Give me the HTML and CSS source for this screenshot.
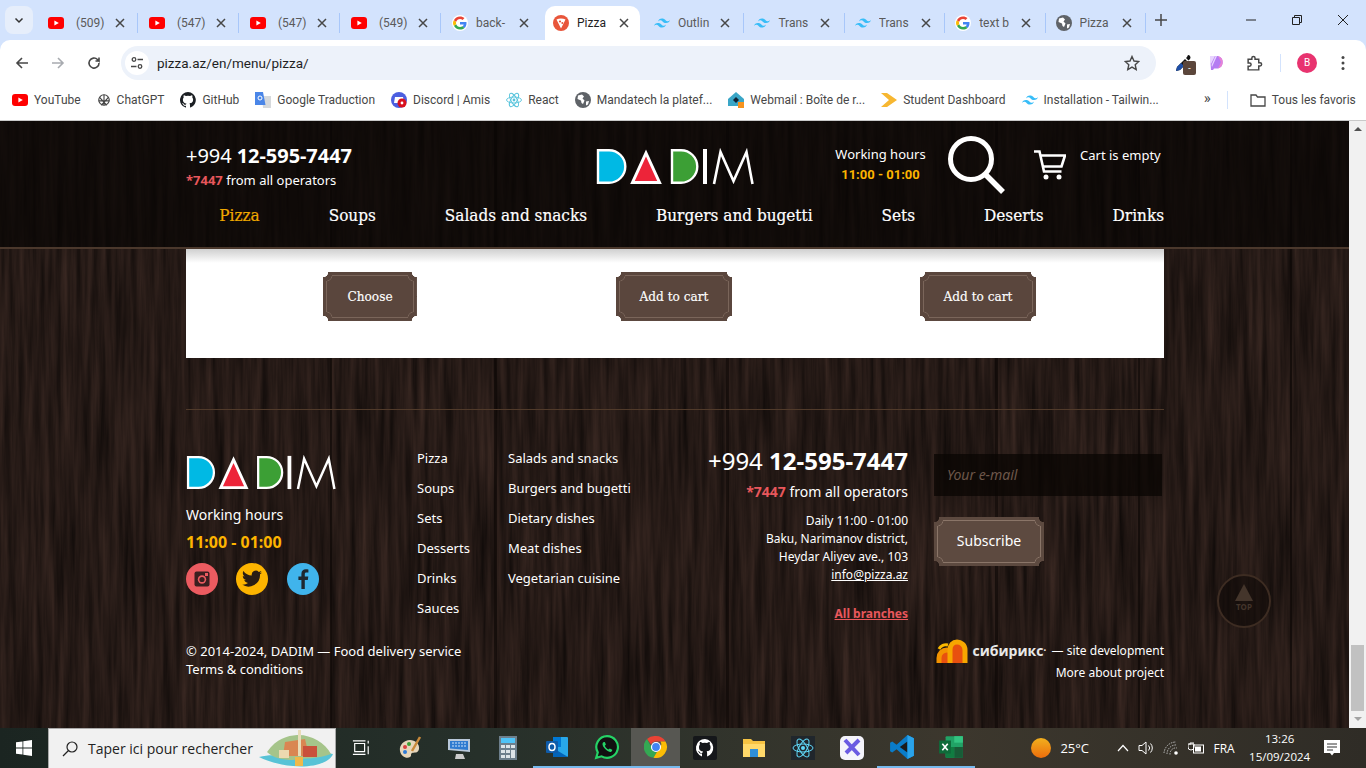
FILE: index.html
```html
<!DOCTYPE html>
<html>
<head>
  <title>Pizza - DADIM</title>
  <link rel="stylesheet" href="styles.css">
</head>
<body>
  <svg class="defs" width="0" height="0">
    <symbol id="yt" viewBox="0 0 16 16"><rect y="2" width="16" height="12" rx="3" fill="#f00"/><path d="M6.4 5.4 10.8 8l-4.4 2.6z" fill="#fff"/></symbol>
    <symbol id="tw" viewBox="0 0 16 16"><path d="M4 6.5C4.5 4.5 5.8 3.5 8 3.5c3.2 0 3.5 2.400 5.200 2.800 1 .2 2-.2 2.800-1.300-.5 2-1.800 3-4 3-3.200 0-3.500-2.400-5.200-2.800C5.800 5 4.800 5.400 4 6.500zM0 11c.5-2 1.800-3 4-3 3.200 0 3.500 2.400 5.200 2.800 1 .2 2-.2 2.800-1.300-.5 2-1.800 3-4 3-3.200 0-3.500-2.400-5.200-2.800C1.800 9.500.8 9.900 0 11z" fill="#38bdf8"/></symbol>
    <symbol id="gg" viewBox="0 0 16 16"><circle cx="8" cy="8" r="8" fill="#fff"/><path d="M14.500 8.200c0-.5 0-.9-.1-1.300H8v2.500h3.700c-.2.900-.7 1.600-1.300 2.100l2.100 1.600c1.200-1.200 2-2.900 2-4.900z" fill="#4285f4"/><path d="M8 14.500c1.800 0 3.300-.6 4.500-1.600l-2.100-1.600c-.6.400-1.400.7-2.400.7-1.800 0-3.300-1.200-3.800-2.800L1.900 10.800C3 13 5.300 14.500 8 14.500z" fill="#34a853"/><path d="M4.200 9.200C4.100 8.800 4 8.400 4 8s.1-.8.200-1.200L1.900 5.200C1.300 6 1 7 1 8s.3 2 .9 2.800z" fill="#fbbc05"/><path d="M8 4c1 0 1.900.4 2.600 1l1.900-1.900C11.300 2.100 9.800 1.500 8 1.500 5.300 1.500 3 3 1.900 5.200l2.300 1.600C4.700 5.200 6.200 4 8 4z" fill="#ea4335"/></symbol>
    <symbol id="globe" viewBox="0 0 16 16"><circle cx="8" cy="8" r="8" fill="#5f6368"/><path d="M3 3.500 7 2.500 9 4.500 7.500 6.500 9.500 8.500 8 12 6.500 11 6 8.500 2.500 7zM11 9.500 14 9 13 12.500 11 13.500z" fill="#fff"/></symbol>
    <symbol id="close" viewBox="0 0 10 10"><path d="M1 1 9 9M9 1 1 9" stroke="#474747" stroke-width="1.500" fill="none"/></symbol>
    <symbol id="tick" viewBox="0 0 24 24"><path d="M9 19 16 12 9 5" stroke="#333" stroke-width="3" fill="none"/></symbol>
    <symbol id="logo" viewBox="0 0 158 38">
      <path d="M2 3.200H13A16.300 16.300 0 0 1 13 35.800H2Z" fill="#00b9e4" stroke="#fff" stroke-width="2.400"/>
      <path d="M50 6 63.500 35.500H36.500Z" fill="#ed2439" stroke="#fff" stroke-width="3"/>
      <path d="M76 3.200H85A16.300 16.300 0 0 1 85 35.800H76Z" fill="#3c9f35" stroke="#fff" stroke-width="2.400"/>
      <path d="M109 2V37" stroke="#fff" stroke-width="4" fill="none"/>
      <path d="M118 37 124.500 5 137.500 34 150.500 5 156.500 37" stroke="#fff" stroke-width="2.600" fill="none"/>
    </symbol>
    <filter id="grain" x="0" y="0" width="100%" height="100%" color-interpolation-filters="sRGB">
      <feTurbulence type="fractalNoise" baseFrequency="0.16 0.008" numOctaves="4" seed="7"/>
      <feColorMatrix type="matrix" values=".2 0 0 0 .045  .14 0 0 0 .03  .12 0 0 0 .025  0 0 0 0 1"/>
    </filter>
  </svg>

  <div class="browser">
    <div class="tabstrip">
      <div class="tab-search"><svg class="ico-12 rot"><use href="#tick"/></svg></div>
      <div class="tab"><svg class="favicon"><use href="#yt"/></svg><span class="tab-title">(509)</span><svg class="tab-close"><use href="#close"/></svg></div>
      <div class="tab"><svg class="favicon"><use href="#yt"/></svg><span class="tab-title">(547)</span><svg class="tab-close"><use href="#close"/></svg></div>
      <div class="tab"><svg class="favicon"><use href="#yt"/></svg><span class="tab-title">(547)</span><svg class="tab-close"><use href="#close"/></svg></div>
      <div class="tab"><svg class="favicon"><use href="#yt"/></svg><span class="tab-title">(549)</span><svg class="tab-close"><use href="#close"/></svg></div>
      <div class="tab tab-nosep"><svg class="favicon"><use href="#gg"/></svg><span class="tab-title tab-title-short">back-</span><svg class="tab-close"><use href="#close"/></svg></div>
      <div class="tab tab-active">
        <svg class="favicon" viewBox="0 0 16 16"><circle cx="8" cy="8" r="8" fill="#e8553a"/><path d="M3.500 4.500 8 13.500l4.500-9C10 3.300 6 3.300 3.500 4.500z" fill="#fff"/><circle cx="7" cy="6.500" r="1.100" fill="#e8553a"/><circle cx="9.300" cy="8" r="1" fill="#e8553a"/></svg>
        <span class="tab-title tab-title-short">Pizza</span><svg class="tab-close"><use href="#close"/></svg>
      </div>
      <div class="tab tab-tight"><svg class="favicon"><use href="#tw"/></svg><span class="tab-title">Outlin</span><svg class="tab-close"><use href="#close"/></svg></div>
      <div class="tab tab-tight"><svg class="favicon"><use href="#tw"/></svg><span class="tab-title">Trans</span><svg class="tab-close"><use href="#close"/></svg></div>
      <div class="tab tab-tight"><svg class="favicon"><use href="#tw"/></svg><span class="tab-title">Trans</span><svg class="tab-close"><use href="#close"/></svg></div>
      <div class="tab tab-tight"><svg class="favicon"><use href="#gg"/></svg><span class="tab-title">text b</span><svg class="tab-close"><use href="#close"/></svg></div>
      <div class="tab tab-tight"><svg class="favicon"><use href="#globe"/></svg><span class="tab-title">Pizza</span><svg class="tab-close"><use href="#close"/></svg></div>
      <svg class="new-tab" viewBox="0 0 12 12"><path d="M6 0V12M0 6H12" stroke="#474747" stroke-width="1.500"/></svg>
      <div class="win-controls">
        <svg class="win-btn" viewBox="0 0 10 10"><path d="M0 5H10" stroke="#222"/></svg>
        <svg class="win-btn" viewBox="0 0 10 10"><path d="M.5 2.500H7.500V9.500H.5ZM2.500 2.500V.5H9.500V7.500H7.500" stroke="#222" fill="none"/></svg>
        <svg class="win-btn" viewBox="0 0 10 10"><path d="M0 0 10 10M10 0 0 10" stroke="#222"/></svg>
      </div>
    </div>

    <div class="toolbar">
      <svg class="nav-ico" viewBox="0 0 16 16"><path d="M14 8H3M8 3 3 8l5 5" stroke="#474747" stroke-width="1.600" fill="none"/></svg>
      <svg class="nav-ico nav-off" viewBox="0 0 16 16"><path d="M2 8H13M8 3l5 5-5 5" stroke="#a8abb0" stroke-width="1.600" fill="none"/></svg>
      <svg class="nav-ico" viewBox="0 0 16 16"><path d="M13 8a5 5 0 1 1-1.500-3.500L13 6V2.500M13 6H9.500" stroke="#474747" stroke-width="1.600" fill="none"/></svg>
      <div class="omnibox">
        <span class="site-chip">
          <svg viewBox="0 0 14 14" class="ico-14"><circle cx="4" cy="3.500" r="1.800" stroke="#474747" stroke-width="1.300" fill="none"/><path d="M7.500 3.500H13M1 10.500H6.500" stroke="#474747" stroke-width="1.300"/><circle cx="10" cy="10.500" r="1.800" stroke="#474747" stroke-width="1.300" fill="none"/></svg>
        </span>
        <span class="url">pizza.az/en/menu/pizza/</span>
        <svg class="star" viewBox="0 0 16 16"><path d="M8 1.500 10 6l4.800.5-3.600 3.200 1 4.800L8 12.100 3.800 14.500l1-4.800L1.200 6.500 6 6z" stroke="#474747" stroke-width="1.400" fill="none"/></svg>
      </div>
      <div class="toolbar-ext">
        <span class="ext-dropper">
          <svg viewBox="0 0 18 18" class="ico-18"><path d="M13 1a2.500 2.500 0 0 1 2 4L13.500 6.500 11 4l1-1zM10 5 2 13l-1 4 4-1 8-8z" fill="#111"/><path d="M6 9 2 13l-1 4 4-1 4-4z" fill="#1d4fa8"/></svg>
          <span class="ext-badge">-</span>
        </span>
        <svg class="ext-purple" viewBox="0 0 16 16"><path d="M1 1H9a6.500 6.500 0 0 1 0 12.500H5L4 15H2z" fill="#b57cf2"/><path d="M1 1H6L2 9 1 8zM8 1 3 12 2.500 10 6.500 1z" fill="#e8d4ff"/><path d="M9 1a6.500 6.500 0 0 1 0 12.500L12 7z" fill="#e783d6"/></svg>
        <svg class="ext-puzzle" viewBox="0 0 16 16"><path d="M2 4H5.500V2.800a1.500 1.500 0 0 1 3 0V4H12V7.300h1.200a1.500 1.500 0 0 1 0 3H12V14H2V10.500H3.300a1.500 1.500 0 0 0 0-3H2z" stroke="#474747" stroke-width="1.400" fill="none"/></svg>
        <span class="toolbar-sep"></span>
        <span class="avatar">B</span>
        <svg class="dots" viewBox="0 0 4 16"><circle cx="2" cy="2.500" r="1.500" fill="#474747"/><circle cx="2" cy="8" r="1.500" fill="#474747"/><circle cx="2" cy="13.500" r="1.500" fill="#474747"/></svg>
      </div>
    </div>

    <div class="bookmarks">
      <a class="bm"><svg class="favicon"><use href="#yt"/></svg>YouTube</a>
      <a class="bm"><svg class="favicon bm-small" viewBox="0 0 16 16"><g fill="none" stroke="#444" stroke-width="1.300"><circle cx="8" cy="8" r="6"/><path d="M3 5l8 9M13 5 5 14M8 2v12M2 9h12"/></g></svg>ChatGPT</a>
      <a class="bm"><svg class="favicon" viewBox="0 0 16 16"><path d="M8 0a8 8 0 0 0-2.500 15.600c.4.100.5-.2.500-.4v-1.400c-2.200.5-2.700-1-2.700-1-.4-.9-.9-1.200-.9-1.200-.7-.5.100-.5.100-.5.800.1 1.200.8 1.200.8.700 1.200 1.900.9 2.300.7.100-.5.300-.9.500-1.100-1.800-.2-3.600-.9-3.600-4 0-.9.300-1.600.8-2.100-.1-.2-.4-1 .1-2.100 0 0 .7-.2 2.200.8a7.600 7.600 0 0 1 4 0c1.500-1 2.200-.8 2.200-.8.400 1.100.2 1.900.1 2.100.5.600.8 1.300.8 2.100 0 3.100-1.900 3.700-3.700 3.900.3.300.6.700.6 1.500v2.200c0 .2.100.5.600.4A8 8 0 0 0 8 0z" fill="#1b1f23"/></svg>GitHub</a>
      <a class="bm"><svg class="favicon" viewBox="0 0 16 16"><path d="M7 4H16V16H8z" fill="#d6d9dc"/><path d="M0 0H8L10.500 13H0z" fill="#4a86e8"/><circle cx="5" cy="6" r="2" fill="none" stroke="#fff"/></svg>Google Traduction</a>
      <a class="bm"><svg class="favicon" viewBox="0 0 16 16"><circle cx="8" cy="8" r="8" fill="#4c5fe0"/><path d="M4 5h8l1 6H3z" fill="#fff"/><circle cx="11" cy="11" r="4.500" fill="#d9101e"/><circle cx="11" cy="11" r="1.400" fill="#fff"/></svg>Discord | Amis</a>
      <a class="bm"><svg class="favicon" viewBox="0 0 16 16"><g fill="none" stroke="#58c4dc" stroke-width=".9"><ellipse cx="8" cy="8" rx="7.500" ry="3"/><ellipse cx="8" cy="8" rx="7.500" ry="3" transform="rotate(60 8 8)"/><ellipse cx="8" cy="8" rx="7.500" ry="3" transform="rotate(120 8 8)"/></g><circle cx="8" cy="8" r="1.400" fill="#58c4dc"/></svg>React</a>
      <a class="bm"><svg class="favicon"><use href="#globe"/></svg>Mandatech la platef...</a>
      <a class="bm"><svg class="favicon" viewBox="0 0 16 16"><path d="M8 0 16 7V14H0V7z" fill="#3aa6c7"/><path d="M8 5 11 8 8 11 5 8z" fill="#123"/><rect x="10" y="10" width="6" height="6" fill="#f7931e"/></svg>Webmail : Boîte de r...</a>
      <a class="bm"><svg class="favicon" viewBox="0 0 16 16"><path d="M0 1H6L16 8 6 15H0L8 8z" fill="#f7b731"/></svg>Student Dashboard</a>
      <a class="bm"><svg class="favicon"><use href="#tw"/></svg>Installation - Tailwin...</a>
      <span class="bm-more">»</span>
      <span class="bm-sep"></span>
      <a class="bm bm-all"><svg class="favicon" viewBox="0 0 16 16"><path d="M1 3H6L7.500 5H15V14H1Z" stroke="#474747" stroke-width="1.300" fill="none"/></svg>Tous les favoris</a>
    </div>

    <div class="viewport">
      <div class="page">
        <svg class="wood" width="100%" height="100%">
          <rect width="100%" height="100%" filter="url(#grain)"/>
          <g fill="#0c0705" opacity=".6">
            <rect x="330" y="0" width="2" height="607"/>
            <rect x="494" y="0" width="3" height="607"/>
            <rect x="726" y="0" width="3" height="607"/>
            <rect x="995" y="0" width="3" height="607"/>
            <rect x="1138" y="0" width="2" height="607"/>
            <rect x="1290" y="0" width="2" height="607"/>
          </g>
        </svg>

        <header class="site-header">
          <div class="container">
            <div class="header-top">
              <div class="header-phone">
                <div class="phone-big">+994 <b>12-595-7447</b></div>
                <div class="phone-note"><b class="red">*7447</b> from all operators</div>
              </div>
              <svg class="logo-big" role="img" aria-label="DADIM"><use href="#logo"/></svg>
              <div class="header-hours">
                <div>Working hours</div>
                <b class="orange">11:00 - 01:00</b>
              </div>
              <svg class="search-ico" viewBox="0 0 58 58"><circle cx="24" cy="23" r="20.500" stroke="#fff" stroke-width="5" fill="none"/><path d="M38 38 56 56" stroke="#fff" stroke-width="5.500"/></svg>
              <svg class="cart-ico" viewBox="0 0 33 30"><path d="M1 1.500H6.500L11 21.500H28.500M7.500 5.500H32L28.500 16.500H10" stroke="#fff" stroke-width="2.600" fill="none"/><circle cx="13" cy="27" r="2.500" fill="#fff"/><circle cx="26" cy="27" r="2.500" fill="#fff"/></svg>
              <div class="cart-text">Cart is empty</div>
            </div>
            <nav class="main-nav">
              <a class="main-link main-link-on">Pizza</a>
              <a class="main-link">Soups</a>
              <a class="main-link">Salads and snacks</a>
              <a class="main-link">Burgers and bugetti</a>
              <a class="main-link">Sets</a>
              <a class="main-link">Deserts</a>
              <a class="main-link">Drinks</a>
            </nav>
          </div>
        </header>

        <div class="container">
          <section class="products">
            <a class="plate-btn btn-choose">Choose</a>
            <a class="plate-btn btn-add-1">Add to cart</a>
            <a class="plate-btn btn-add-2">Add to cart</a>
          </section>

          <footer class="site-footer">
            <div class="foot-grid">
              <div class="foot-brand">
                <svg class="logo-small" role="img" aria-label="DADIM"><use href="#logo"/></svg>
                <div class="foot-hours">Working hours</div>
                <b class="foot-time orange">11:00 - 01:00</b>
                <div class="socials">
                  <a class="social social-ig"><svg viewBox="0 0 18 18" class="ico-18"><rect x="1.500" y="1.500" width="15" height="15" rx="2" fill="#3a1f1f"/><circle cx="9" cy="9.500" r="4.200" fill="#eb5b60"/><circle cx="9" cy="9.500" r="2.600" fill="#3a1f1f"/><rect x="12" y="3" width="3" height="3" fill="#eb5b60"/></svg></a>
                  <a class="social social-tw"><svg viewBox="0 0 20 18" class="ico-20"><path d="M20 2.500c-.7.300-1.500.6-2.400.7.900-.5 1.500-1.300 1.800-2.300-.8.500-1.700.8-2.600 1A4.100 4.100 0 0 0 9.800 5.600C6.400 5.400 3.400 3.800 1.400.9.300 2.800.800 5.200 2.700 6.400c-.7 0-1.300-.2-1.900-.5 0 2 1.400 3.700 3.300 4.100-.6.200-1.200.2-1.900.1.500 1.600 2 2.800 3.800 2.800A8.300 8.300 0 0 1 0 14.600 11.600 11.600 0 0 0 18 4.300c.8-.5 1.500-1.100 2-1.800z" fill="#2a1d14"/></svg></a>
                  <a class="social social-fb"><svg viewBox="0 0 12 20" class="ico-fb"><path d="M7.800 20V11h3l.5-3.500H7.800V5.300c0-1 .3-1.700 1.800-1.700h1.800V.5C11 .4 10 .3 8.800.3 6.200.3 4.400 1.900 4.400 4.900v2.600H1.400V11h3v9z" fill="#1e2830"/></svg></a>
                </div>
              </div>
              <ul class="foot-menu">
                <li>Pizza</li><li>Soups</li><li>Sets</li><li>Desserts</li><li>Drinks</li><li>Sauces</li>
              </ul>
              <ul class="foot-menu">
                <li>Salads and snacks</li><li>Burgers and bugetti</li><li>Dietary dishes</li><li>Meat dishes</li><li>Vegetarian cuisine</li>
              </ul>
              <div class="foot-contacts">
                <div class="foot-phone">+994 <b>12-595-7447</b></div>
                <div class="foot-note"><b class="red">*7447</b> from all operators</div>
                <div class="foot-address">
                  <div>Daily 11:00 - 01:00</div>
                  <div>Baku, Narimanov district,</div>
                  <div>Heydar Aliyev ave., 103</div>
                  <a class="foot-mail">info@pizza.az</a>
                </div>
                <a class="foot-branches">All branches</a>
              </div>
              <div class="foot-sub">
                <div class="mail-field">Your e-mail</div>
                <a class="plate-btn plate-btn-line">Subscribe</a>
              </div>
            </div>
            <div class="foot-bottom">
              <div class="foot-copy">
                <div>© 2014-2024, DADIM — Food delivery service</div>
                <div>Terms &amp; conditions</div>
              </div>
              <div class="foot-dev">
                <div class="dev-line">
                  <svg class="sib-mark" viewBox="0 0 32 25"><path d="M3 24V19A8 8 0 0 1 19 19V24" fill="#e8500f" stroke="#f39200" stroke-width="5"/><path d="M14 24V11C14 6 17 3 21 3S29 6 29 11V24" fill="#e8500f" stroke="#f7a600" stroke-width="5"/><path d="M3 10A8 8 0 0 1 12 6" fill="none" stroke="#fbb900" stroke-width="3"/></svg>
                  <b class="sib-name">сибирикс</b><span class="sib-dot">·</span>
                  <span>— site development</span>
                </div>
                <div class="dev-more">More about project</div>
              </div>
            </div>
          </footer>
        </div>

        <a class="to-top"><span class="to-top-arrow"></span><span class="to-top-text">TOP</span></a>
      </div>
      <div class="scrollbar">
        <span class="scroll-up"></span>
        <span class="scroll-thumb"></span>
        <span class="scroll-down"></span>
      </div>
    </div>

    <div class="taskbar">
      <div class="start"><svg viewBox="0 0 16 16" class="ico-16"><path d="M0 2.300 6.500 1.400V7.500H0ZM7.300 1.300 16 0V7.500H7.300ZM0 8.500H6.500V14.600L0 13.700ZM7.300 8.500H16V16L7.300 14.700Z" fill="#fff"/></svg></div>
      <div class="task-search">
        <svg viewBox="0 0 16 16" class="ico-16 task-search-ico"><circle cx="10" cy="6" r="5" stroke="#222" stroke-width="1.200" fill="none"/><path d="M6.500 9.500 1 15" stroke="#222" stroke-width="1.300"/></svg>
        <span>Taper ici pour rechercher</span>
        <svg class="town" viewBox="0 0 74 38"><path d="M0 27C12 24 20 25 30 28 48 22 64 22 74 24 70 34 50 38 34 36 20 35 8 31 0 27z" fill="#58c3d6"/><path d="M8 22C18 8 28 6 38 5 50 4 66 12 72 24 60 29 44 28 34 30 24 30 14 28 8 22z" fill="#a5c48a"/><path d="M26 12 46 9 50 26H24z" fill="#d98652"/><path d="M39 0h3V26h-3z" fill="#e8dcb8"/><path d="M44 16H58V27H44z" fill="#c9503b"/><path d="M20 20H30V28H20z" fill="#ecd9b0"/><path d="M36 27H44V36H36z" fill="#f0b94a"/></svg>
      </div>
      <div class="task-icons">
        <span class="task-item"><svg viewBox="0 0 20 20" class="ico-18"><path d="M1 2H15M1 17H15M3 5H14V14H3zM18 2V5M18 8V17" stroke="#fff" stroke-width="1.300" fill="none"/></svg></span>
        <span class="task-item"><svg viewBox="0 0 24 24" class="ico-24"><path d="M12 4C6 4 1 9 2 15s7 8 10 6c2-1 0-3 2-4s6 1 7-4c1-5-4-9-9-9z" fill="#e7d6ba"/><circle cx="7" cy="11" r="2" fill="#d94040"/><circle cx="11" cy="8" r="2" fill="#3c9f35"/><circle cx="7" cy="16" r="2" fill="#2f7bd6"/><path d="M22 1 14 15" stroke="#c98a3a" stroke-width="2.500"/></svg></span>
        <span class="task-item"><svg viewBox="0 0 24 24" class="ico-24"><path d="M1 3H23V16L1 14z" fill="#b8c8da"/><path d="M3 5H21V14L3 12.500z" fill="#2e7bd0"/><path d="M5 7H19M5 10H19" stroke="#cfe6fb" stroke-dasharray="2 1"/><path d="M9 18H16L18 23H8z" fill="#ccc"/></svg></span>
        <span class="task-item"><svg viewBox="0 0 18 24" class="ico-calc"><rect width="18" height="24" fill="#6d7f8c"/><rect x="2" y="2" width="14" height="5" fill="#4fc3f7"/><path d="M2 9h4v3H2zM7 9h4v3H7zM12 9h4v3h-4zM2 14h4v3H2zM7 14h4v3H7zM12 14h4v8h-4zM2 19h4v3H2zM7 19h4v3H7z" fill="#dde4e8"/></svg></span>
        <span class="task-item"><svg viewBox="0 0 24 24" class="ico-24"><rect x="8" y="2" width="15" height="20" rx="1" fill="#28a8ea"/><path d="M8 2H16V12H8z" fill="#0078d4"/><path d="M8 13 23 22H8z" fill="#0364b8"/><rect x="1" y="6" width="12" height="12" rx="1" fill="#0f5ba9"/><ellipse cx="7" cy="12" rx="3" ry="3.500" fill="none" stroke="#fff" stroke-width="1.500"/></svg></span>
        <span class="task-item"><svg viewBox="0 0 24 24" class="ico-26"><path d="M12 2a10 10 0 0 0-8.500 15L2 22l5-1.400A10 10 0 1 0 12 2z" fill="#111" stroke="#25d366" stroke-width="2"/><path d="M8.500 7.500c-1 1-1 3 1 5.500s4.500 4 6 3.500c1-.3 1.500-1.500 1.300-2l-2.300-1.200-1 1c-1.500-.5-3-2-3.500-3.500l1-1-1-2.500z" fill="#25d366"/></svg></span>
        <span class="task-item task-active"><svg viewBox="0 0 24 24" class="ico-24"><path d="M12 1a11 11 0 0 1 9.500 5.500H12A5.500 5.500 0 0 0 7 9.500L3 4A11 11 0 0 1 12 1z" fill="#ea4335"/><path d="M3 4 8 13a5.500 5.500 0 0 0 5 4L9.500 22.700A11 11 0 0 1 3 4z" fill="#34a853"/><path d="M21.500 6.500A11 11 0 0 1 9.500 22.700L15 13.500A5.500 5.500 0 0 0 16.500 6.500z" fill="#fbbc05"/><circle cx="12" cy="12" r="4.500" fill="#4285f4" stroke="#fff" stroke-width="1.200"/></svg></span>
        <span class="task-item"><svg viewBox="0 0 24 24" class="ico-24"><rect width="24" height="24" rx="2" fill="#15171a"/><path d="M12 3a9 9 0 0 0-3 17.500v-3c-2.500.5-3-1-3-1-.5-1-1-1.500-1-1.500 1-.3 2 1.500 2 1.500 1 1 2 .5 2.500.3 0-.6.300-1 .5-1.300-2-.3-4-1-4-4.500 0-1 .3-1.800.9-2.500-.1-.2-.4-1.200.1-2.400 0 0 .8-.3 2.500.9a8.500 8.500 0 0 1 4.600 0c1.700-1.200 2.500-.9 2.500-.9.500 1.200.2 2.200.1 2.400.6.700.9 1.500.9 2.500 0 3.500-2 4.200-4 4.500.3.300.5.800.5 1.500v3.500A9 9 0 0 0 12 3z" fill="#fff"/></svg></span>
        <span class="task-item"><svg viewBox="0 0 24 24" class="ico-24"><path d="M1 3H9L11 5H23V21H1z" fill="#f6c343"/><path d="M1 8H23V21H1z" fill="#ffd96a"/><rect x="8" y="13" width="8" height="8" fill="#2f8fd8"/></svg></span>
        <span class="task-item"><svg viewBox="0 0 24 24" class="ico-24"><rect width="24" height="24" fill="#20262c"/><g fill="none" stroke="#61dafb"><ellipse cx="12" cy="12" rx="10" ry="4"/><ellipse cx="12" cy="12" rx="10" ry="4" transform="rotate(60 12 12)"/><ellipse cx="12" cy="12" rx="10" ry="4" transform="rotate(120 12 12)"/></g><circle cx="12" cy="12" r="2" fill="#61dafb"/></svg></span>
        <span class="task-item"><svg viewBox="0 0 24 24" class="ico-24"><rect width="24" height="24" rx="5" fill="#f4f4fb"/><path d="M5 4 19 19M19 4 6 17" stroke="#6a5be2" stroke-width="4"/></svg></span>
        <span class="task-item"><svg viewBox="0 0 24 24" class="ico-26"><path d="M17 1 23 4V20L17 23 7 14 3 17 1 16V8L3 7 7 10z" fill="#0a7cc9"/><path d="M17 7 10 12 17 17z" fill="#1b1b1b"/><path d="M17 1 23 4V20L17 23z" fill="#2aa3ea"/></svg></span>
        <span class="task-item"><svg viewBox="0 0 24 24" class="ico-26"><rect x="7" y="2" width="16" height="20" rx="1" fill="#21a366"/><path d="M15 2H23V8H15z" fill="#33c481"/><path d="M7 12H15V22H7z" fill="#107c41"/><path d="M15 12H23V22H15z" fill="#185c37"/><rect x="1" y="6" width="11" height="12" fill="#0f6b3a"/><path d="M4 9 9 15M9 9 4 15" stroke="#fff" stroke-width="1.500"/></svg></span>
      </div>
      <div class="tray">
        <span class="weather-sun"></span>
        <span class="tray-temp">25°C</span>
        <svg class="tray-chev" viewBox="0 0 12 8"><path d="M1 7 6 1.500 11 7" stroke="#fff" stroke-width="1.200" fill="none"/></svg>
        <svg class="tray-ico" viewBox="0 0 16 16"><path d="M1 5.500H4L8 2V14L4 10.500H1ZM10.500 5.500a3.500 3.500 0 0 1 0 5M12.500 3.500a6.500 6.500 0 0 1 0 9" stroke="#fff" fill="none"/></svg>
        <svg class="tray-ico" viewBox="0 0 16 16"><path d="M1 13A12 12 0 0 1 13 2M4 14A9 9 0 0 1 14 5M7 14.500A6 6 0 0 1 14 8" stroke="#bbb" fill="none" stroke-dasharray="1.500 1"/><circle cx="13" cy="13" r="1.800" fill="#fff"/></svg>
        <svg class="tray-ico" viewBox="0 0 16 16"><path d="M1 4H3V2M5 4V2M0 4H6V7A3 3 0 0 1 0 7z" stroke="#fff" fill="none"/><rect x="5.500" y="5" width="10" height="8" stroke="#fff" fill="none"/><rect x="7" y="6.500" width="6" height="5" fill="#fff"/></svg>
        <span class="tray-lang">FRA</span>
        <div class="tray-clock"><div>13:26</div><div>15/09/2024</div></div>
        <svg class="tray-notif" viewBox="0 0 16 16"><path d="M0 0H16V13H10L8 15.500 6 13H0Z" fill="#fff"/><path d="M3 4H13M3 7H13M3 10H9" stroke="#333"/></svg>
      </div>
    </div>
  </div>
</body>
</html>
```

FILE: styles.css
```css
* {
  box-sizing: border-box;
}

html, body {
  margin: 0;
  height: 100%;
  overflow: hidden;
}

body {
  font-family: "Noto Sans", "Open Sans", sans-serif;
}

a {
  color: inherit;
}

.defs {
  position: absolute;
}

.browser {
  display: flex;
  flex-direction: column;
  height: 768px;
  background: #d3e3fd;
}

/* sizes shared by the small icons */
.ico-12 { width: 12px; height: 12px; }
.ico-14 { width: 14px; height: 14px; }
.ico-16 { width: 16px; height: 16px; }
.ico-18 { width: 18px; height: 18px; }
.ico-20 { width: 20px; height: 18px; }
.ico-24 { width: 24px; height: 24px; }
.ico-26 { width: 26px; height: 26px; }
.ico-calc { width: 18px; height: 24px; }
.ico-fb { width: 12px; height: 20px; }
.rot { transform: rotate(90deg); }

.favicon {
  width: 16px;
  height: 16px;
  flex: none;
}

/* tab strip */
.tabstrip {
  display: flex;
  align-items: flex-end;
  height: 40px;
  padding-left: 5px;
  font-family: Roboto, sans-serif;
  font-size: 12px;
  color: #474747;
}

.tab-search {
  width: 28px;
  height: 28px;
  margin: 0 4px 6px 0;
  border-radius: 8px;
  background: #e6eefb;
  display: flex;
  align-items: center;
  justify-content: center;
}

.tab {
  position: relative;
  display: flex;
  align-items: center;
  width: 101px;
  height: 34px;
  padding-left: 11px;
  margin-bottom: 0;
}

.tab::after {
  content: "";
  position: absolute;
  right: 0;
  top: 7px;
  width: 1px;
  height: 20px;
  background: #a8c7fa;
}

.tab-nosep::after {
  display: none;
}

.tab-title {
  width: 33px;
  margin-left: 12px;
  white-space: nowrap;
  overflow: hidden;
  color: #5a5a5a;
}

.tab-title-short {
  width: 30px;
  margin-left: 8px;
}

.tab-close {
  width: 10px;
  height: 10px;
  margin-left: 6px;
}

.tab-nosep .tab-close {
  margin-left: 13px;
}

.tab-tight {
  width: 100.4px;
  padding-left: 10px;
}

.tab-tight .tab-title {
  width: 32px;
  margin-left: 8px;
}

.tab-tight .tab-close {
  margin-left: 10px;
}

.tab-active {
  width: 95px;
  margin: 0 4px 0 3px;
  padding-left: 8px;
  background: #fff;
  border-radius: 10px 10px 0 0;
}

.tab-active .tab-title {
  color: #1f1f1f;
}

.tab-active .tab-close {
  margin-left: 12px;
}

.tab-active::after {
  display: none;
}

.new-tab {
  width: 12px;
  height: 12px;
  margin: 0 0 14px 9px;
}

.win-controls {
  margin-left: auto;
  display: flex;
  height: 40px;
  align-items: center;
}

.win-btn {
  width: 10px;
  height: 10px;
  margin: 0 18px;
}

/* toolbar */
.toolbar {
  display: flex;
  align-items: center;
  height: 40px;
  padding: 6px 0 0 14px;
  background: #fff;
  border-radius: 10px 10px 0 0;
}

.nav-ico {
  width: 16px;
  height: 16px;
  margin-right: 20px;
}

.omnibox {
  display: flex;
  align-items: center;
  width: 1035px;
  height: 34px;
  margin-left: -1px;
  border-radius: 17px;
  background: #edf2fa;
  font-family: Roboto, sans-serif;
  font-size: 13.5px;
  color: #1f1f1f;
}

.site-chip {
  display: flex;
  align-items: center;
  justify-content: center;
  width: 24px;
  height: 24px;
  margin-left: 4px;
  border-radius: 50%;
  background: #fff;
}

.url {
  margin-left: 8px;
}

.star {
  width: 16px;
  height: 16px;
  margin-left: auto;
  margin-right: 16px;
}

.toolbar-ext {
  display: flex;
  align-items: center;
  flex: 1;
  position: relative;
}

.ext-dropper {
  position: relative;
  width: 18px;
  height: 18px;
  margin-left: 19px;
}

.ext-badge {
  position: absolute;
  left: 8px;
  top: 7px;
  width: 13px;
  height: 14px;
  border-radius: 2px;
  background: #5b463b;
  color: #fff;
  font-size: 9px;
  line-height: 14px;
  text-align: center;
}

.ext-purple {
  width: 16px;
  height: 16px;
  margin-left: 16px;
}

.ext-puzzle {
  width: 17px;
  height: 17px;
  margin-left: 21px;
}

.toolbar-sep {
  width: 1px;
  height: 18px;
  margin-left: 17px;
  background: #d3e3fd;
}

.avatar {
  width: 20px;
  height: 20px;
  margin-left: 16px;
  border-radius: 50%;
  background: #e8336f;
  color: #fff;
  font-family: Roboto, sans-serif;
  font-size: 10px;
  line-height: 20px;
  text-align: center;
}

.dots {
  width: 4px;
  height: 16px;
  margin-left: 24px;
}

/* bookmarks */
.bookmarks {
  display: flex;
  align-items: center;
  gap: 16px;
  height: 41px;
  padding-left: 12px;
  background: #fff;
  border-bottom: 1px solid #c9c9c9;
  font-family: Roboto, sans-serif;
  font-size: 12px;
  color: #474747;
  white-space: nowrap;
}

.bm {
  display: flex;
  align-items: center;
  gap: 6px;
}

.bm-small {
  width: 14px;
  height: 14px;
}

.bm-more {
  margin-left: 29px;
  font-size: 15px;
  line-height: 15px;
  margin-top: -3px;
}

.bm-sep {
  width: 1px;
  height: 18px;
  background: #d3e3fd;
}

.bm-all {
  margin-left: 6px;
}

/* page */
.viewport {
  display: flex;
  flex: 1;
  min-height: 0;
}

.page {
  position: relative;
  flex: 1;
  overflow: hidden;
  background: #241916;
  color: #fff;
}

.wood {
  position: absolute;
  left: 0;
  top: 0;
}

.container {
  position: relative;
  width: 978px;
  margin: 0 auto;
  left: 0.5px;
}

.red { color: #e8575c; }
.orange { color: #fdb400; }

.site-header {
  position: relative;
  height: 128px;
  background: rgba(8, 5, 4, 0.72);
  border-bottom: 2px solid #4b382c;
}

.header-top {
  display: flex;
  align-items: flex-start;
}

.header-phone {
  width: 410px;
  padding-top: 22px;
}

.phone-big {
  font-size: 20px;
  line-height: 26px;
  letter-spacing: -0.05px;
}

.phone-note {
  font-size: 13px;
  line-height: 18px;
  margin-top: 2px;
}

.logo-big {
  width: 158px;
  height: 38px;
  margin-top: 26px;
}

.header-hours {
  width: 91px;
  margin: 24px 0 0 81px;
  font-size: 13px;
  line-height: 18px;
  text-align: center;
}

.header-hours b {
  display: block;
  margin-top: 3px;
  font-family: Roboto, sans-serif;
}

.search-ico {
  width: 58px;
  height: 58px;
  margin: 15px 0 0 21px;
}

.cart-ico {
  width: 33px;
  height: 30px;
  margin: 29px 0 0 28px;
}

.cart-text {
  margin: 25px 0 0 14px;
  font-size: 13px;
  line-height: 18px;
}

.main-nav {
  display: flex;
  justify-content: flex-end;
  gap: 69px;
  margin-top: 9px;
}

.main-link {
  font-family: "DejaVu Serif Condensed", "DejaVu Serif", serif;
  font-size: 17px;
  line-height: 24px;
  white-space: nowrap;
  -webkit-text-stroke: 0.2px currentColor;
}

.main-link-on {
  color: #efa800;
}

/* product strip */
.products {
  position: relative;
  height: 109px;
  background: linear-gradient(#cfcfcf, #fff 14px);
}

.plate-btn {
  --plate: #5a463d;
  --line: #7a655a;
  position: absolute;
  top: 23px;
  display: flex;
  align-items: center;
  justify-content: center;
  height: 49px;
  padding-bottom: 2px;
  color: #fff;
  font-family: "DejaVu Serif Condensed", "DejaVu Serif", serif;
  font-size: 13.5px;
  -webkit-text-stroke: 0.15px currentColor;
  background:
    radial-gradient(circle at 0 0, transparent 5px, var(--plate) 5.5px) 0 0 / 51% 51% no-repeat,
    radial-gradient(circle at 100% 0, transparent 5px, var(--plate) 5.5px) 100% 0 / 51% 51% no-repeat,
    radial-gradient(circle at 0 100%, transparent 5px, var(--plate) 5.5px) 0 100% / 51% 51% no-repeat,
    radial-gradient(circle at 100% 100%, transparent 5px, var(--plate) 5.5px) 100% 100% / 51% 51% no-repeat;
}

/* thin inner line of the plate, with the concave corners */
.plate-btn::before {
  content: "";
  position: absolute;
  inset: 3px;
  background:
    radial-gradient(circle at 0 0, transparent 5.5px, var(--line) 6px, transparent 6.8px) 0 0 / 7px 7px no-repeat,
    radial-gradient(circle at 100% 0, transparent 5.5px, var(--line) 6px, transparent 6.8px) 100% 0 / 7px 7px no-repeat,
    radial-gradient(circle at 0 100%, transparent 5.5px, var(--line) 6px, transparent 6.8px) 0 100% / 7px 7px no-repeat,
    radial-gradient(circle at 100% 100%, transparent 5.5px, var(--line) 6px, transparent 6.8px) 100% 100% / 7px 7px no-repeat,
    linear-gradient(var(--line), var(--line)) 50% 0 / calc(100% - 12px) 1px no-repeat,
    linear-gradient(var(--line), var(--line)) 50% 100% / calc(100% - 12px) 1px no-repeat,
    linear-gradient(var(--line), var(--line)) 0 50% / 1px calc(100% - 12px) no-repeat,
    linear-gradient(var(--line), var(--line)) 100% 50% / 1px calc(100% - 12px) no-repeat;
}

.btn-choose { left: 137px; width: 94px; }
.btn-add-1 { left: 430px; width: 116px; }
.btn-add-2 { left: 734px; width: 116px; }

/* footer */
.site-footer {
  margin-top: 51px;
  border-top: 1px solid #503a2a;
  padding-top: 33px;
  color: #fff;
}

.foot-grid {
  display: grid;
  grid-template-columns: 231px 91px 178px 222px 230px;
  height: 180px;
}

.foot-brand {
  padding-top: 11px;
}

.logo-small {
  display: block;
  width: 150px;
  height: 36px;
}

.foot-hours {
  margin-top: 15px;
  font-size: 14px;
  line-height: 20px;
}

.foot-time {
  display: block;
  margin-top: 7px;
  font-size: 16px;
  line-height: 20px;
}

.socials {
  display: flex;
  gap: 18px;
  margin-top: 11px;
}

.social {
  display: flex;
  align-items: center;
  justify-content: center;
  width: 32px;
  height: 32px;
  border-radius: 50%;
}

.social-ig { background: #eb5b60; }
.social-tw { background: #fdb400; }
.social-fb { background: #40b4ec; margin-left: 1px; }

.foot-menu {
  list-style: none;
  margin: 0;
  padding: 0;
  font-size: 13px;
  line-height: 30px;
}

.foot-contacts {
  text-align: right;
  padding-top: 3px;
}

.foot-phone {
  font-size: 24px;
  line-height: 30px;
}

.foot-note {
  font-size: 14px;
  line-height: 20px;
  margin-top: 6px;
}

.foot-address {
  margin-top: 10px;
  font-size: 12px;
  line-height: 18px;
}

.foot-mail,
.foot-branches {
  text-decoration: underline;
}

.foot-branches {
  display: block;
  margin-top: 21px;
  color: #e8575c;
  font-size: 12px;
  font-weight: 700;
  line-height: 18px;
}

.foot-sub {
  position: relative;
  padding: 11px 0 0 26px;
}

.mail-field {
  width: 228px;
  height: 42px;
  padding-left: 13px;
  background: rgba(10, 5, 3, 0.75);
  color: #6d574a;
  font-size: 14px;
  font-style: italic;
  line-height: 42px;
}

.plate-btn-line {
  --plate: #5d4a40;
  --line: #8a7568;
  position: absolute;
  top: 74px;
  left: 26px;
  width: 110px;
  font-family: "Noto Sans", sans-serif;
  font-size: 14px;
  -webkit-text-stroke: 0;
}

.foot-bottom {
  display: flex;
  justify-content: space-between;
  margin-top: 19px;
  font-size: 13px;
  line-height: 18px;
}

.foot-dev {
  text-align: right;
  font-size: 12px;
}

.dev-line {
  display: flex;
  align-items: center;
  justify-content: flex-end;
  height: 18px;
}

.sib-mark {
  width: 32px;
  height: 25px;
  margin-right: 4px;
}

.sib-name {
  font-family: "Open Sans", sans-serif;
  font-size: 14px;
  color: #e8e8e8;
}

.sib-dot {
  margin-right: 5px;
}

.dev-more {
  margin-top: 4px;
}

.to-top {
  position: absolute;
  left: 1217px;
  top: 453px;
  display: flex;
  flex-direction: column;
  align-items: center;
  width: 54px;
  height: 54px;
  padding-top: 8px;
  border: 2px solid #3d2c22;
  border-radius: 50%;
  background: rgba(14, 9, 7, 0.55);
}

.to-top-arrow {
  width: 0;
  height: 0;
  border-left: 9px solid transparent;
  border-right: 9px solid transparent;
  border-bottom: 17px solid #44352b;
}

.to-top-text {
  font-size: 8px;
  font-weight: 700;
  color: #44352b;
  line-height: 10px;
  margin-top: 1px;
}

/* scrollbar of the window */
.scrollbar {
  display: flex;
  flex-direction: column;
  align-items: center;
  width: 17px;
  background: #f1f1f1;
}

.scroll-up,
.scroll-down {
  width: 0;
  height: 0;
  border-left: 4px solid transparent;
  border-right: 4px solid transparent;
}

.scroll-up {
  margin-top: 6px;
  border-bottom: 4px solid #505050;
}

.scroll-thumb {
  width: 13px;
  height: 66px;
  margin-top: auto;
  background: #c1c1c1;
}

.scroll-down {
  margin: 6px 0 7px;
  border-top: 4px solid #a3a3a3;
}

/* taskbar */
.taskbar {
  display: flex;
  align-items: center;
  height: 40px;
  background: linear-gradient(90deg, #1b2521, #26302a 35%, #3c372d 70%, #2f2c26);
  color: #fff;
  font-size: 12px;
}

.start {
  display: flex;
  align-items: center;
  justify-content: center;
  width: 48px;
  height: 40px;
}

.task-search {
  display: flex;
  align-items: center;
  width: 288px;
  height: 40px;
  padding-left: 13px;
  background: #f1f1f1;
  border: 1px solid #a9a9a9;
  border-bottom: 0;
  color: #222;
  font-family: "Open Sans", sans-serif;
  font-size: 14px;
}

.task-search-ico {
  flex: none;
  margin-right: 10px;
}

.town {
  width: 74px;
  height: 38px;
  margin-left: auto;
  margin-right: 2px;
}

.task-icons {
  display: flex;
  height: 40px;
}

.task-item {
  display: flex;
  align-items: center;
  justify-content: center;
  width: 49.2px;
  height: 40px;
}

.task-item:nth-child(5),
.task-item:nth-child(6),
.task-item:nth-child(7),
.task-item:nth-child(12),
.task-item:nth-child(13) {
  border-bottom: 2px solid #76b9ed;
}

.task-active {
  background: #575752;
}

.tray {
  display: flex;
  align-items: center;
  height: 40px;
  flex: 1;
  font-family: "Open Sans", sans-serif;
}

.weather-sun {
  width: 20px;
  height: 20px;
  margin-left: 56px;
  border-radius: 50%;
  background: linear-gradient(#f2b01e, #ec6d0c);
}

.tray-temp {
  margin-left: 9px;
  font-size: 13px;
  width: 34px;
}

.tray-chev {
  width: 12px;
  height: 8px;
  margin-left: 23px;
}

.tray-ico {
  width: 16px;
  height: 16px;
  margin-left: 9px;
}

.tray-lang {
  margin-left: 9px;
}

.tray-clock {
  width: 68px;
  margin-left: 11px;
  font-size: 11.5px;
  line-height: 18px;
  text-align: center;
}

.tray-notif {
  width: 16px;
  height: 16px;
  margin-left: 10px;
}
```
